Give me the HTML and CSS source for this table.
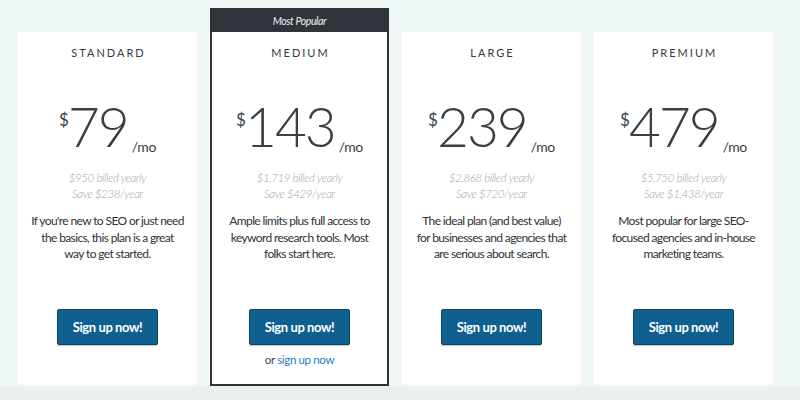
FILE: index.html
```html
<!DOCTYPE html>
<html>
<head>
<meta charset="utf-8">
<link rel="stylesheet" href="styles.css">
</head>
<body>
<section class="pricing">
  <div class="card">
    <div class="card-body">
      <h2 class="plan">STANDARD</h2>
      <div class="price"><span class="cur">$</span><span class="amt">79</span><span class="per">/mo</span></div>
      <p class="billed">$950 billed yearly<br>Save $238/year</p>
      <p class="desc">If you're new to SEO or just need the basics, this plan is a great way to get started.</p>
      <a class="btn">Sign up now!</a>
    </div>
  </div>
  <div class="card featured">
    <div class="badge">Most Popular</div>
    <div class="card-body">
      <h2 class="plan">MEDIUM</h2>
      <div class="price"><span class="cur">$</span><span class="amt">143</span><span class="per">/mo</span></div>
      <p class="billed">$1,719 billed yearly<br>Save $429/year</p>
      <p class="desc">Ample limits plus full access to keyword research tools. Most folks start here.</p>
      <a class="btn">Sign up now!</a>
      <p class="alt">or <a class="link">sign up now</a></p>
    </div>
  </div>
  <div class="card">
    <div class="card-body">
      <h2 class="plan">LARGE</h2>
      <div class="price"><span class="cur">$</span><span class="amt">239</span><span class="per">/mo</span></div>
      <p class="billed">$2,868 billed yearly<br>Save $720/year</p>
      <p class="desc">The ideal plan (and best value) for businesses and agencies that are serious about search.</p>
      <a class="btn">Sign up now!</a>
    </div>
  </div>
  <div class="card">
    <div class="card-body">
      <h2 class="plan">PREMIUM</h2>
      <div class="price"><span class="cur">$</span><span class="amt">479</span><span class="per">/mo</span></div>
      <p class="billed">$5,750 billed yearly<br>Save $1,438/year</p>
      <p class="desc">Most popular for large SEO-focused agencies and in-house marketing teams.</p>
      <a class="btn">Sign up now!</a>
    </div>
  </div>
</section>
</body>
</html>
```
FILE: styles.css
```css
html, body {
  margin: 0;
  padding: 0;
}
body {
  width: 800px;
  height: 400px;
  overflow: hidden;
  background: linear-gradient(#e3ebe9, #e9f0ee);
  font-family: Lato, "Open Sans", sans-serif;
  color: #33373b;
}
.pricing {
  height: 355px;
  padding: 32px 0 0 18px;
  background: #eef7f6;
  display: flex;
  align-items: flex-start;
  gap: 13px;
}
.card {
  width: 179px;
  height: 353px;
  background: #fff;
  box-sizing: border-box;
  display: flex;
  flex-direction: column;
}
.featured {
  height: 378px;
  margin-top: -24px;
  border: 2px solid #2f3338;
}
.badge {
  height: 22px;
  background: #30343a;
  color: #f0f0f0;
  font-size: 10.5px;
  font-style: italic;
  letter-spacing: -0.4px;
  text-align: center;
  line-height: 22px;
}
.featured .card-body {
  margin: 0 -2px;
}
.card-body {
  flex: 1;
  display: flex;
  flex-direction: column;
  align-items: center;
  padding: 14px 13px 0;
  text-align: center;
}
.plan {
  margin: 0;
  font-size: 11px;
  font-weight: 400;
  letter-spacing: 2px;
  line-height: 14px;
  color: #34383d;
  padding-left: 2px;
}
.price {
  margin-top: 39px;
  height: 55px;
  display: flex;
  align-items: flex-start;
  color: #3a3f45;
}
.cur {
  font-size: 17px;
  line-height: 17px;
  margin-top: 12px;
  margin-right: -1px;
}
.amt {
  font-size: 55px;
  font-weight: 300;
  line-height: 55px;
  letter-spacing: -2px;
}
.per {
  font-size: 14px;
  line-height: 14px;
  letter-spacing: -0.4px;
  margin-top: 41px;
  margin-left: 4px;
}
.billed {
  margin: 16px 0 0;
  font-size: 11.5px;
  line-height: 16px;
  letter-spacing: -0.4px;
  font-style: italic;
  font-weight: 300;
  color: #a3a5a7;
}
.desc {
  margin: 11px 0 0;
  font-size: 12px;
  line-height: 16.5px;
  letter-spacing: -0.62px;
  color: #2e3135;
}
.btn {
  margin-top: auto;
  margin-bottom: 40px;
  width: 101px;
  height: 36px;
  box-sizing: border-box;
  background: #0f5f8f;
  border: 1px solid #0b4466;
  border-radius: 2px;
  color: #fff;
  font-weight: 700;
  font-size: 13px;
  letter-spacing: -0.4px;
  line-height: 34px;
  text-align: center;
  box-shadow: 0 1px 1px rgba(0,0,0,0.25);
}
.featured .btn {
  margin-bottom: 0;
}
.alt {
  margin: 7px 0 16px;
  font-size: 11.5px;
  line-height: 16px;
  letter-spacing: -0.35px;
  color: #444;
}
.link {
  color: #2a7ab8;
}
```
